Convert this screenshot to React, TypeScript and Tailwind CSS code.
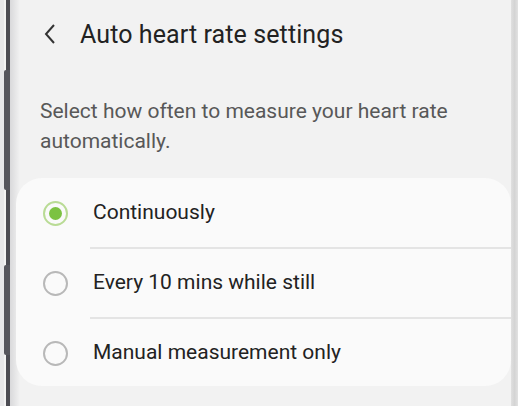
import React from 'react';

const options = [
    { label: 'Continuously', selected: true },
    { label: 'Every 10 mins while still', selected: false },
    { label: 'Manual measurement only', selected: false },
];

function Radio({ selected }: { selected: boolean }) {
    if (selected) {
        return (
            <div className="w-[25px] h-[25px] rounded-full border-[2px] border-[#b9db95] flex items-center justify-center">
                <div className="w-[13px] h-[13px] rounded-full bg-[#7cc242]" />
            </div>
        );
    }
    return <div className="w-[25px] h-[25px] rounded-full border-[2px] border-[#b8b8b8]" />;
}

export default function App() {
    return (
        <div
            className="w-[518px] h-[406px] flex bg-[#f2f2f2] overflow-hidden"
            style={{ fontFamily: 'Roboto, "Noto Sans", sans-serif' }}
        >
            {/* phone edge */}
            <div className="w-[4px] bg-[#e6e6e8]" />
            <div className="w-[6px] flex flex-col">
                <div className="h-[70px] flex">
                    <div className="w-[2px]" />
                    <div className="flex-1 bg-[#4b4b52]" />
                </div>
                <div className="h-[120px] bg-[#55555c] rounded-l-[2px]" />
                <div className="h-[75px] flex">
                    <div className="w-[2px]" />
                    <div className="flex-1 bg-[#4b4b52]" />
                </div>
                <div className="h-[90px] bg-[#55555c] rounded-l-[2px]" />
                <div className="flex-1 flex">
                    <div className="w-[2px]" />
                    <div className="flex-1 bg-[#4b4b52]" />
                </div>
            </div>
            <div className="w-[10px] bg-gradient-to-r from-[#d9d9db] to-[#f2f2f2]" />

            <div className="w-[491px] flex flex-col">
                <div className="h-[70px] flex items-center pl-[23px] pb-[1px]">
                    <svg width="14" height="22" viewBox="0 0 14 22" className="mt-[-1px]">
                        <path d="M11 2 L3 11 L11 20" fill="none" stroke="#333" strokeWidth="2" />
                    </svg>
                    <span className="ml-[23px] text-[25px] text-[#222] tracking-[0.1px]">
                        Auto heart rate settings
                    </span>
                </div>
                <p className="pl-[20px] pr-[20px] pt-[26px] text-[21px] leading-[30px] text-[#585858]">
                    Select how often to measure your heart rate automatically.
                </p>
                <div className="mt-[22px] ml-[-4px] w-[495px] h-[208px] bg-[#fafafa] rounded-[26px] flex flex-col pt-[1px]">
                    {options.map((opt, i) => (
                        <div key={i} className="flex flex-col">
                            {i > 0 && <div className="ml-[74px] h-[2px] bg-[#e4e4e4]" />}
                            <div className="h-[68px] flex items-center pl-[27px]">
                                <Radio selected={opt.selected} />
                                <span className="ml-[25px] text-[21px] text-[#222]">{opt.label}</span>
                            </div>
                        </div>
                    ))}
                </div>
            </div>

            <div className="w-[7px] bg-gradient-to-r from-[#e0e0e0] via-[#d4d4d4] to-[#e2e2e2]" />
        </div>
    );
}
